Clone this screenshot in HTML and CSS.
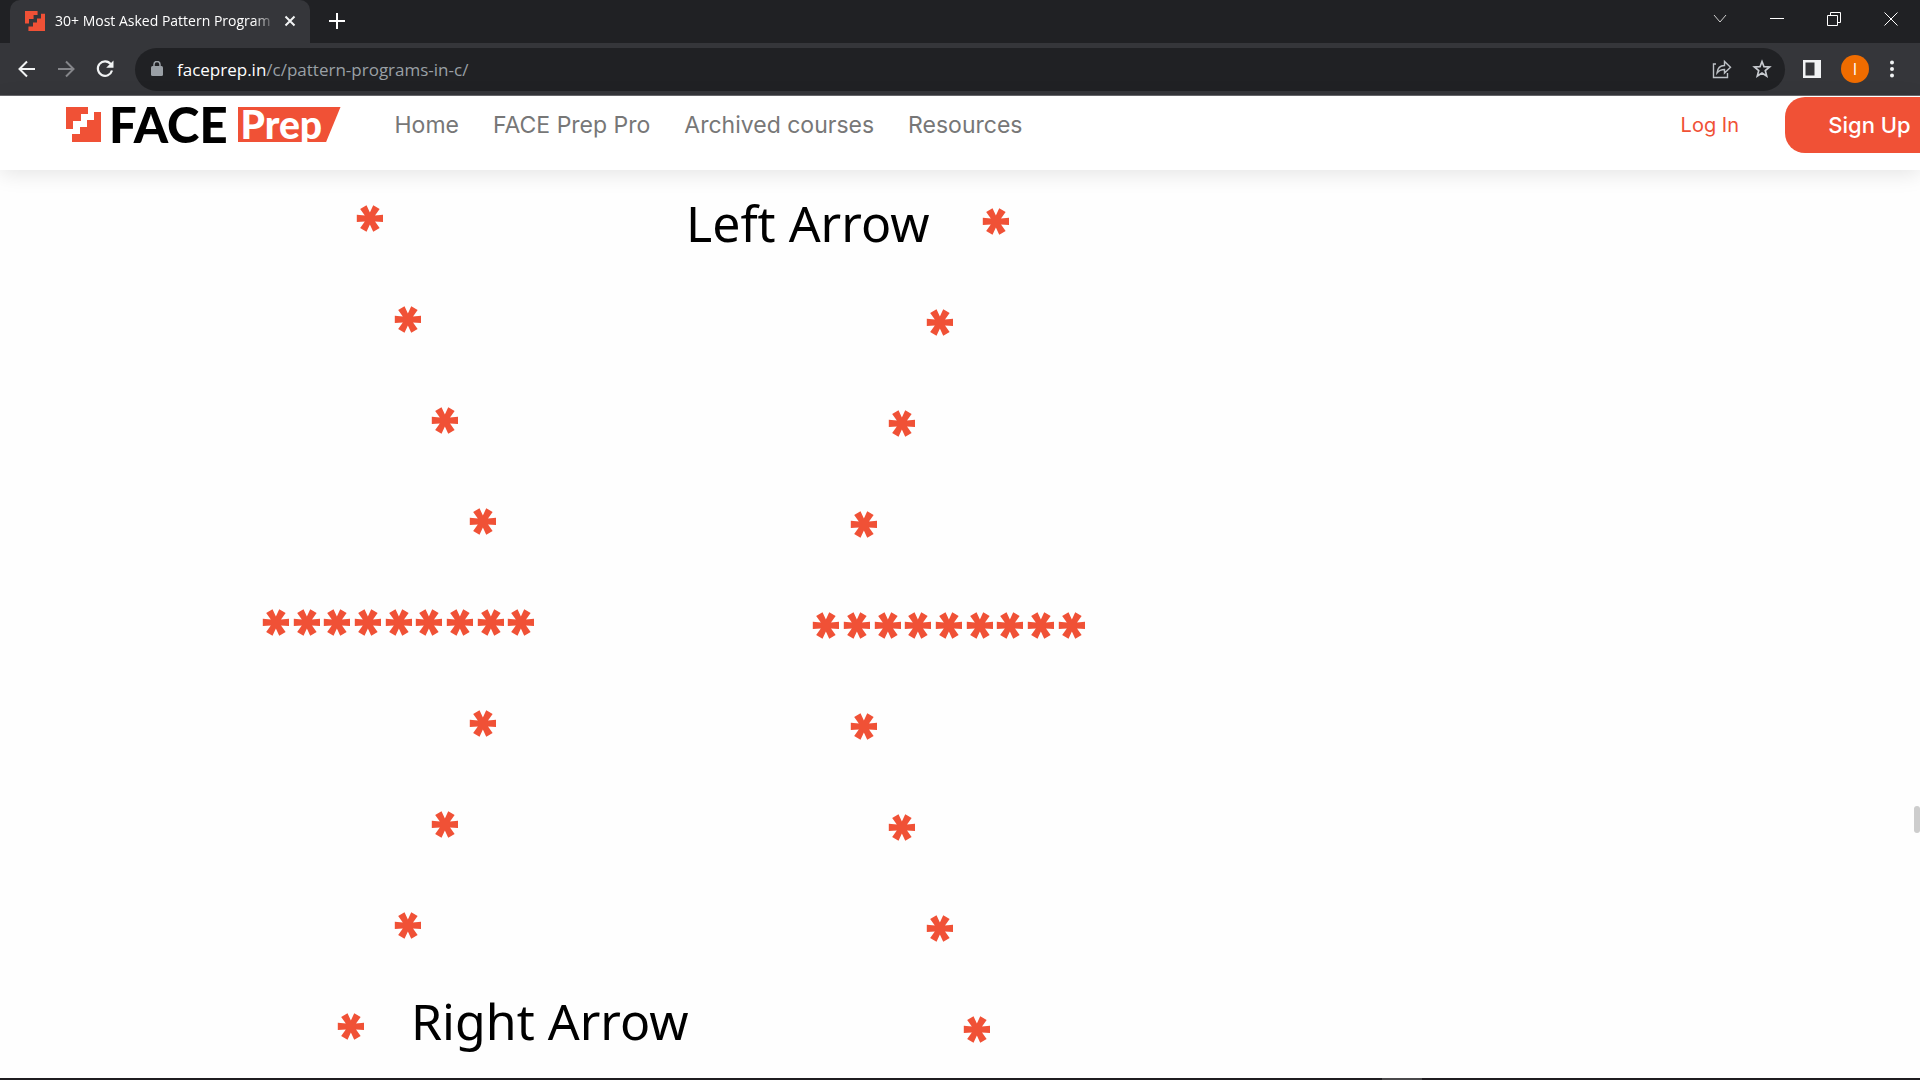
FILE: index.html
```html
<!DOCTYPE html>
<html lang="en">
<head>
<meta charset="utf-8">
<title>30+ Most Asked Pattern Programs</title>
<link rel="stylesheet" href="styles.css">
</head>
<body>
<div class="browser">
  <div class="tabstrip">
    <div class="tab">
      <svg class="favicon" viewBox="0 0 35 35" aria-hidden="true"><path fill="#f05136" d="M0 0H22V7H15V14H7V22H0ZM35 5V35H6V27H14V20H21V13H28V5Z"/></svg>
      <span class="tab-title">30+ Most Asked Pattern Program</span>
      <button class="tab-close" aria-label="Close tab"><svg width="12" height="12" viewBox="0 0 12 12"><path d="M1.500 1.500 10.500 10.500M10.500 1.500 1.500 10.500" stroke="#f1f3f4" stroke-width="2"/></svg></button>
    </div>
    <button class="new-tab" aria-label="New tab"><svg width="16" height="16" viewBox="0 0 16 16"><path d="M8 0V16M0 8H16" stroke="#fff" stroke-width="2"/></svg></button>
    <div class="window-controls">
      <button aria-label="Search tabs"><svg width="14" height="14" viewBox="0 0 14 14"><path d="M1 3 7 10 13 3" fill="none" stroke="#d0d0d0"/></svg></button>
      <button aria-label="Minimize"><svg width="14" height="14" viewBox="0 0 14 14"><path d="M0 6.500H14" stroke="#fff"/></svg></button>
      <button aria-label="Restore"><svg width="14" height="14" viewBox="0 0 14 14"><path d="M.5 3.500H10.500V13.500H.5ZM3.500 3V.5H13.500V10.500H11" fill="none" stroke="#fff"/></svg></button>
      <button aria-label="Close"><svg width="14" height="14" viewBox="0 0 14 14"><path d="M.5.5 13.500 13.500M13.500.5.5 13.500" stroke="#fff"/></svg></button>
    </div>
  </div>
  <div class="toolbar">
    <button aria-label="Back"><svg width="18" height="18" viewBox="0 0 18 18"><path d="M17 9H2M9 1.500 1.500 9 9 16.500" fill="none" stroke="#f1f3f4" stroke-width="2"/></svg></button>
    <button aria-label="Forward" disabled><svg width="18" height="18" viewBox="0 0 18 18"><path d="M1 9H16M9 1.500 16.500 9 9 16.500" fill="none" stroke="#85868a" stroke-width="2"/></svg></button>
    <button aria-label="Reload"><svg width="18" height="18" viewBox="0 0 18 18"><path d="M14.800 4.200A7.200 7.200 0 1 0 16 10.500" fill="none" stroke="#f1f3f4" stroke-width="2.200"/><path d="M17.500.5V7.800H10.200Z" fill="#f1f3f4"/></svg></button>
    <div class="omnibox">
      <svg width="12" height="16" viewBox="0 0 12 16" aria-hidden="true"><rect y="5" width="12" height="10" rx="1.500" fill="#9aa0a6"/><path d="M3 6V3.500a3 3 0 0 1 6 0V6" fill="none" stroke="#9aa0a6" stroke-width="1.500"/></svg>
      <div class="url" role="textbox" aria-label="Address bar" tabindex="0"><span class="host">faceprep.in</span>/c/pattern-programs-in-c/</div>
      <button aria-label="Share"><svg width="20" height="20" viewBox="0 0 20 20"><path d="M4 5H1.500V18.500H15.500V14M5 14C5.500 9 8 6.500 12.500 6.500V2.500L18.500 8.200 12.500 14V10.500C9 10.500 7 11.500 5 14Z" fill="none" stroke="#bdc1c6" stroke-width="1.400"/></svg></button>
      <button aria-label="Bookmark"><svg width="20" height="20" viewBox="0 0 20 20"><path d="M10 2.500 12 7.700 17.600 8 13.300 11.600 14.700 17 10 14 5.300 17 6.700 11.600 2.400 8 8 7.700Z" fill="none" stroke="#c8cbd0" stroke-width="1.700"/></svg></button>
    </div>
    <div class="tools">
      <button aria-label="Side panel"><svg width="18" height="18" viewBox="0 0 18 18"><path fill="#f1f3f4" fill-rule="evenodd" d="M0 0H18V18H0ZM2.500 2.500V15.500H11.500V2.500Z"/></svg></button>
      <button class="avatar" aria-label="Profile">I</button>
      <button aria-label="Menu"><svg width="6" height="18" viewBox="0 0 6 18"><path stroke="#f1f3f4" stroke-width="4" stroke-linecap="round" d="M3 2.500V2.510M3 9V9.010M3 15.500V15.510"/></svg></button>
    </div>
  </div>
</div>

<header class="site-header">
  <a class="logo" href="#" aria-label="FACE Prep">
    <svg class="logo-mark" viewBox="0 0 35 35" aria-hidden="true"><path fill="#f05136" d="M0 0H22V7H15V14H7V22H0ZM35 5V35H6V27H14V20H21V13H28V5Z"/></svg>
    <span class="logo-face">FACE</span>
    <span class="logo-prep">Prep</span>
  </a>
  <nav class="nav">
    <a href="#">Home</a>
    <a href="#">FACE Prep Pro</a>
    <a href="#">Archived courses</a>
    <a href="#">Resources</a>
  </nav>
  <a class="login" href="#">Log In</a>
  <button class="signup">Sign Up</button>
</header>

<main class="content">
  <svg class="figure" viewBox="0 0 1120 908" role="img" aria-label="Right arrow and left arrow star patterns">
    <!-- right arrow; each star is turned so that one bar lies flat -->
    <g class="stars">
      <text rotate="90" x="336" y="29">*</text>
      <text rotate="90" x="374" y="130">*</text>
      <text rotate="90" x="411" y="231">*</text>
      <text rotate="90" x="449" y="332">*</text>
      <text rotate="90" x="242 273 303 334 365 395 426 457 487" y="433">*********</text>
      <text rotate="90" x="449" y="534">*</text>
      <text rotate="90" x="411" y="635">*</text>
      <text rotate="90" x="374" y="736">*</text>
      <text rotate="90" x="317" y="837">*</text>
    </g>
    <text class="caption" x="411" y="870">Right Arrow</text>
    <!-- left arrow -->
    <g class="stars">
      <text rotate="90" x="962" y="32">*</text>
      <text rotate="90" x="906" y="133">*</text>
      <text rotate="90" x="868" y="234">*</text>
      <text rotate="90" x="830" y="335">*</text>
      <text rotate="90" x="792 823 854 884 915 946 976 1007 1038" y="436">*********</text>
      <text rotate="90" x="830" y="537">*</text>
      <text rotate="90" x="868" y="638">*</text>
      <text rotate="90" x="906" y="739">*</text>
      <text rotate="90" x="943" y="840">*</text>
    </g>
    <text class="caption" x="686" y="72">Left Arrow</text>
  </svg>
  <div class="scroll-thumb"></div>
</main>
<footer class="taskbar"><span class="task"></span></footer>
</body>
</html>
```
FILE: styles.css
```css
* { box-sizing: border-box; }
body { margin: 0; min-height: 100vh; display: flex; flex-direction: column; background: #fefefe; font-family: "Open Sans", "Noto Sans", sans-serif; overflow-x: hidden; }
button { border: 0; padding: 0; background: none; display: flex; align-items: center; justify-content: center; font: inherit; color: inherit; }
a { color: inherit; text-decoration: none; }
svg { display: block; flex: none; }
.browser { background: #202124; color: #fff; }
.tabstrip { display: flex; align-items: flex-end; height: 43px; padding: 0 1px 0 10px; }
.tab { display: flex; align-items: center; width: 300px; height: 43px; padding: 0 14px 2px 15px; background: #35363a; border-radius: 10px 10px 0 0; }
.favicon { width: 20px; height: 20px; }
.tab-title { flex: 1; margin: 0 8px 0 10px; font-size: 14px; white-space: nowrap; overflow: hidden; mask-image: linear-gradient(to right, #000 90%, transparent); }
.new-tab { width: 32px; height: 41px; margin: 0 0 2px 11px; }
.window-controls { display: flex; margin-left: auto; }
.window-controls button { width: 57px; height: 37px; margin-bottom: 6px; }
.toolbar { display: flex; align-items: center; height: 53px; padding: 0 25px 0 18px; background: #35363a; border-bottom: 1px solid #69696d; }
.toolbar > button { width: 18px; margin-right: 21px; }
.omnibox { display: flex; align-items: center; flex: 1; height: 43px; padding: 0 13px 0 16px; gap: 20px; border-radius: 22px; background: #202124; }
.url { flex: 1; margin-left: -6px; font-size: 17px; color: #9aa0a6; }
.host { color: #fff; }
.tools { display: flex; align-items: center; gap: 20px; margin-left: 18px; }
.avatar { width: 28px; height: 28px; border-radius: 50%; background: #ef6c00; font-size: 16px; }
.site-header { display: flex; align-items: flex-start; height: 74px; padding-left: 66px; background: #fff; box-shadow: 0 4px 20px rgba(0, 0, 0, .1); color: #777; font-family: Inter, sans-serif; }
.logo { display: flex; align-items: center; height: 35px; margin-top: 11px; font-family: Lato, sans-serif; font-weight: 900; }
.logo-mark { width: 35px; height: 35px; }
.logo-face { margin-left: 8px; font-size: 49px; line-height: 35px; color: #000; }
.logo-prep { width: 103px; height: 35px; margin-left: 10px; padding-left: 3px; font-size: 39px; line-height: 35px; color: #fff; background: #f05136; clip-path: polygon(0 0, 100% 0, 86% 100%, 0 100%); }
.nav { display: flex; gap: 34px; margin-left: 54px; font-size: 23px; line-height: 58px; }
.login { margin-left: auto; font-size: 20px; line-height: 58px; color: #f05136; }
.signup { width: 135px; height: 56px; margin: 1px 0 0 46px; padding-left: 34px; border-radius: 20px 0 0 20px; background: #f05136; color: #fff; font-size: 22px; font-weight: 500; white-space: nowrap; }
.content { position: relative; flex: 1; }
.figure { width: 1120px; max-width: 100%; }
.stars { font-family: Inter, sans-serif; font-size: 64px; font-weight: 900; fill: #f05136; }
.caption { font-family: "Noto Sans", sans-serif; font-size: 50px; }
.scroll-thumb { position: absolute; right: 0; top: 70%; width: 6px; height: 27px; border-radius: 3px; background: #cdcdcd; }
.taskbar { height: 2px; background: #1f1d20; }
.task { display: block; width: 40px; height: 2px; margin-left: 72%; background: #4a494b; }
```
